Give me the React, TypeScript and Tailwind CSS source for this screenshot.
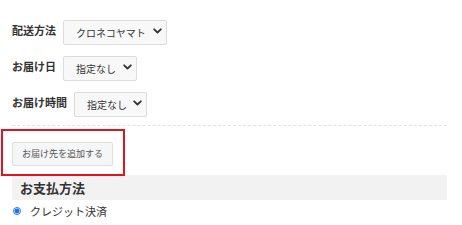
import { useState } from 'react';

function Chevron() {
  return (
    <svg width="9" height="6" viewBox="0 0 9 6" fill="none" stroke="#333" strokeWidth="1.8" strokeLinecap="round" strokeLinejoin="round">
      <path d="M1.2 1.3 4.5 4.5 7.8 1.3" />
    </svg>
  );
}

function Select({ value, options, width }: { value: string; options: string[]; width: string }) {
  const [v, setV] = useState(value);
  return (
    <div className={`relative h-[25px] ${width}`}>
      <select
        value={v}
        onChange={(e) => setV(e.target.value)}
        className="h-full w-full appearance-none rounded-[2px] border border-[#dcdcdc] bg-[#f8f8f8] pl-[12px] pr-[2px] text-[10px] text-[#333] outline-none"
      >
        {options.map((o) => (
          <option key={o}>{o}</option>
        ))}
      </select>
      <span className="pointer-events-none absolute right-[5px] top-1/2 -translate-y-1/2 flex">
        <Chevron />
      </span>
    </div>
  );
}

export default function App() {
  return (
    <div
      className="min-h-screen bg-white pl-[12px] pr-[15px] text-[#333]"
      style={{ fontFamily: '"Noto Sans CJK JP", "Noto Sans", sans-serif' }}
    >
      {/* Delivery fields */}
      <div className="flex flex-col gap-[11px] pt-[18px]">
        <div className="flex items-center gap-[7px]">
          <span className="text-[11px] font-bold">配送方法</span>
          <Select value="クロネコヤマト" options={['クロネコヤマト', '佐川急便']} width="w-[104px]" />
        </div>
        <div className="flex items-center gap-[7px]">
          <span className="text-[11px] font-bold">お届け日</span>
          <Select value="指定なし" options={['指定なし']} width="w-[74px]" />
        </div>
        <div className="flex items-center gap-[7px]">
          <span className="text-[11px] font-bold">お届け時間</span>
          <Select value="指定なし" options={['指定なし', '午前中']} width="w-[73px]" />
        </div>
      </div>

      <div className="mt-[10px] border-t border-dashed border-[#e2e2e2]" />

      {/* Add address */}
      <div className="pt-[12px]">
        <div className="relative inline-block">
          <button className="h-[24px] w-[101px] rounded-[2px] border border-[#dedede] bg-[#f5f6f7] text-[9px] text-[#555]">
            お届け先を追加する
          </button>
          <span className="pointer-events-none absolute -left-[11px] -right-[12px] -top-[9px] -bottom-[10px] border-2 border-[#e0141e]" />
        </div>
      </div>

      {/* Payment */}
      <div className="mt-[9px] flex h-[25px] items-center bg-[#f2f2f2] pl-[8px]">
        <h2 className="text-[13px] font-bold">お支払方法</h2>
      </div>
      <label className="mt-[3px] flex items-center gap-[9px] pl-[1px]">
        <input type="radio" defaultChecked className="h-[8px] w-[8px] m-0 accent-[#1a73e8]" name="pay" />
        <span className="text-[11px]">クレジット決済</span>
      </label>
    </div>
  );
}
